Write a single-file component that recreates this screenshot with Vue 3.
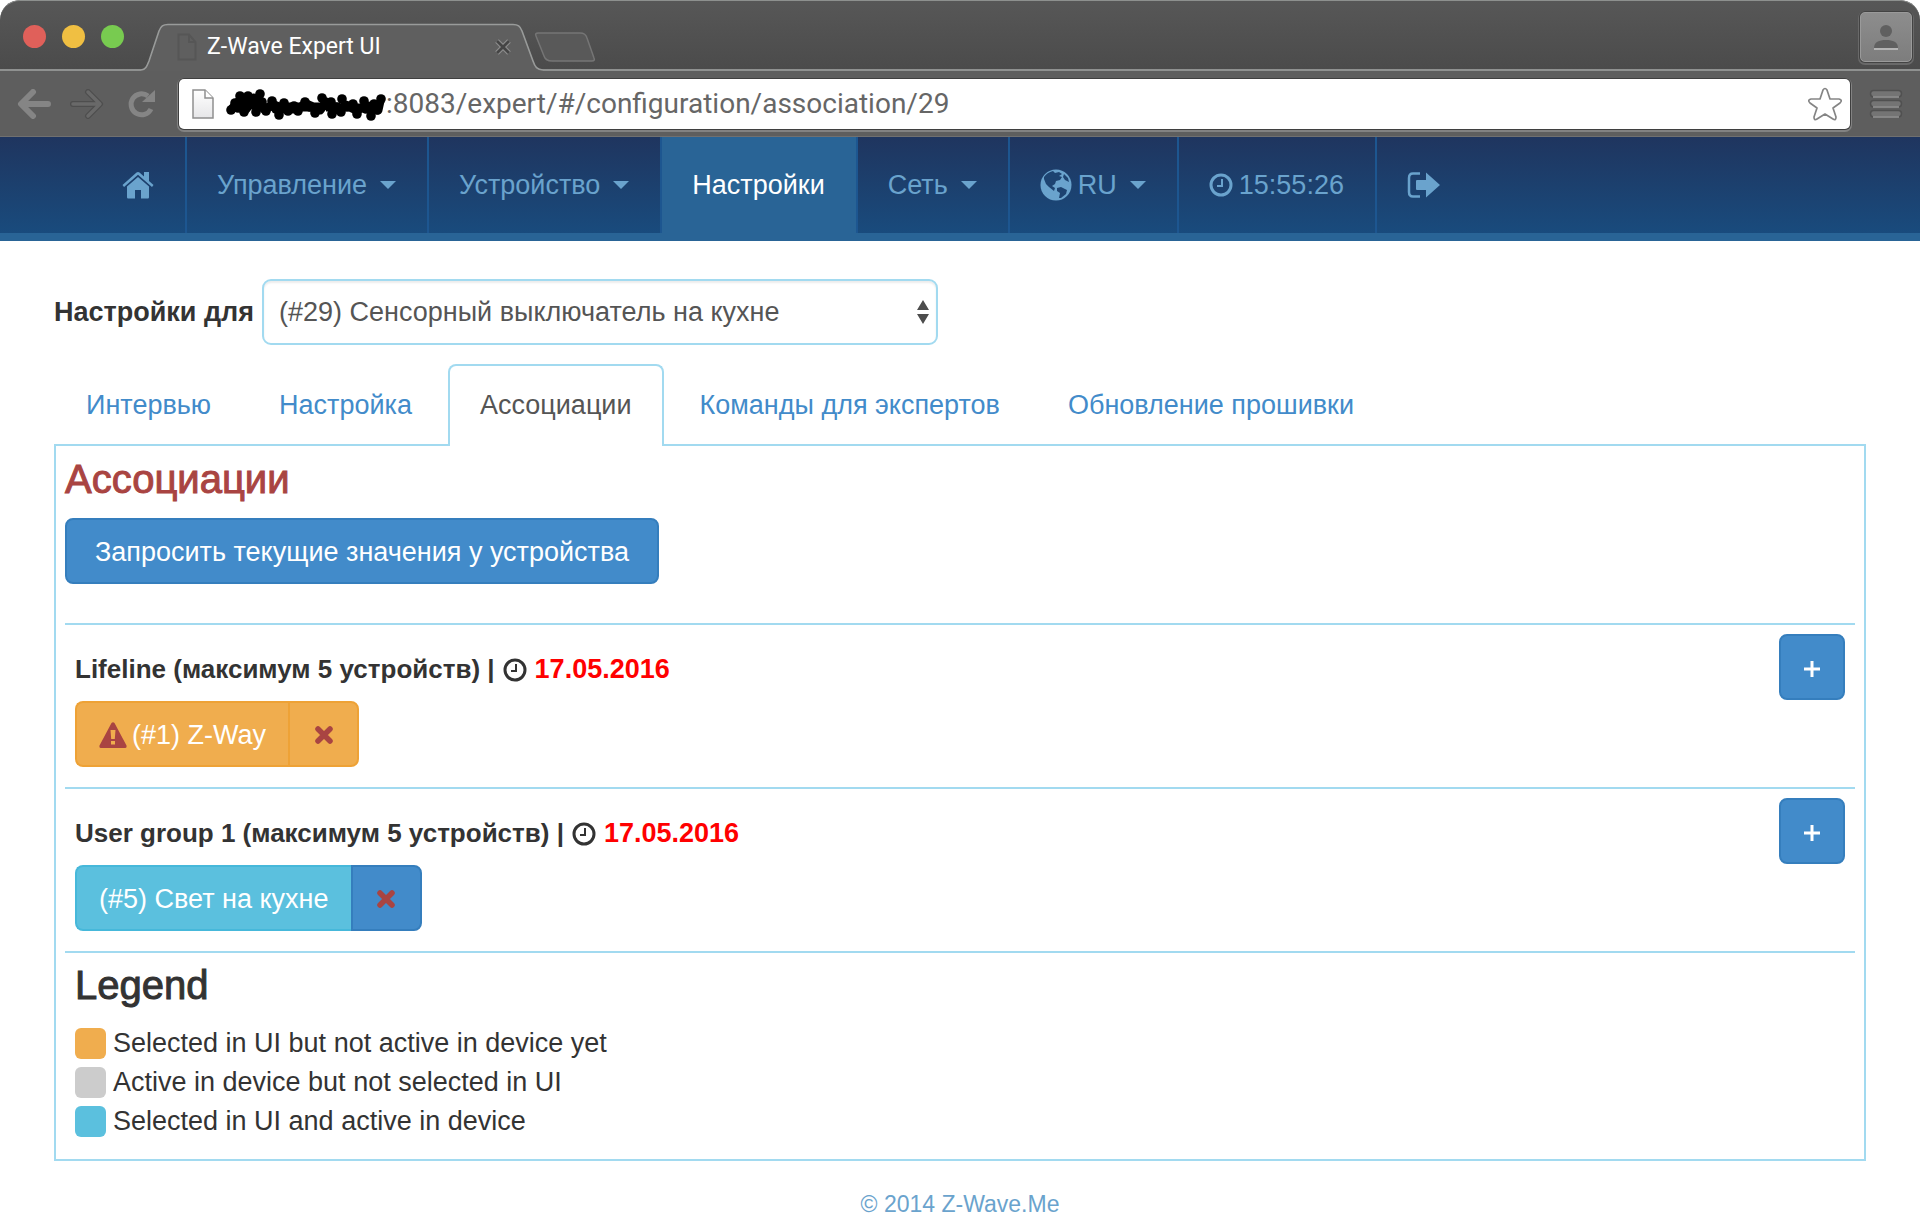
<script setup>
import { ref } from 'vue'

const address = ref(':8083/expert/#/configuration/association/29')
const device = ref('29')

const tabs = [
  { label: 'Интервью' },
  { label: 'Настройка' },
  { label: 'Ассоциации', active: true },
  { label: 'Команды для экспертов' },
  { label: 'Обновление прошивки' },
]

const groups = [
  { title: 'Lifeline (максимум 5 устройств) |', date: '17.05.2016', device: '(#1) Z-Way', kind: 'pending', warning: true },
  { title: 'User group 1 (максимум 5 устройств) |', date: '17.05.2016', device: '(#5) Свет на кухне', kind: 'stored', warning: false },
]

const legend = [
  { kind: 'pending', text: 'Selected in UI but not active in device yet' },
  { kind: 'device-only', text: 'Active in device but not selected in UI' },
  { kind: 'stored', text: 'Selected in UI and active in device' },
]

// Dots that make up the marker scribble over the host name
const blots = [
  [5, 26], [9, 19], [12, 24], [14, 12], [17, 17], [18, 28], [22, 12], [24, 20], [30, 28], [34, 10], [36, 18], [40, 27],
  [46, 17], [50, 25], [53, 31], [58, 19], [62, 27], [68, 22], [72, 27], [79, 18], [84, 23], [89, 29], [96, 14],
  [100, 20], [105, 18], [106, 30], [110, 23], [116, 15], [115, 28], [121, 23], [127, 20], [131, 30], [138, 17],
  [140, 25], [145, 32], [148, 20], [151, 26], [155, 15],
]
</script>

<template>
  <div class="window">
    <header class="chrome">
      <div class="strip">
        <div class="lights">
          <button class="light close" aria-label="Close"></button>
          <button class="light minimise" aria-label="Minimise"></button>
          <button class="light zoom" aria-label="Zoom"></button>
        </div>
        <div class="browser-tab">
          <svg class="tab-shape" viewBox="0 0 402 48" width="402" height="48" aria-hidden="true">
            <path d="M0 46.500C5 46 6 43 8 38L18 8C20 3 22 1.500 27 1.500H372C377 1.500 379 3 381 8L392 38C394 44 396 46 402 46.500V48H0Z" fill="#5f5f5f" />
            <path d="M0 47C5 46.500 6 43 8 38L18 8C20 3 22 1.500 27 1.500H372C377 1.500 379 3 381 8L392 38C394 44 396 46.500 402 47" fill="none" stroke="#999b9a" stroke-width="1.600" />
          </svg>
          <svg class="tab-page" viewBox="0 0 20 28" width="20" height="28" aria-hidden="true">
            <path d="M1.500 1.500H12L18.500 9V26.500H1.500ZM12 1.500V9H18.500" fill="none" stroke="#565656" stroke-width="2" />
          </svg>
          <span class="tab-title">Z-Wave Expert UI</span>
          <button class="tab-close" aria-label="Close tab">
            <svg viewBox="0 0 18 18" width="18" height="18"><path d="M3 3L15 15M15 3L3 15" stroke="#8e8e8e" stroke-width="5" /><path d="M3 3L15 15M15 3L3 15" stroke="#454545" stroke-width="2.800" /></svg>
          </button>
        </div>
        <button class="new-tab" aria-label="New tab">
          <svg viewBox="0 0 62 32" width="62" height="32"><path d="M4 2H46C50 2 52 3 53 7L60 27C61 29 60 30 58 30H18C13 30 11 28 10 25L2 5C1 3 2 2 4 2Z" fill="#595959" stroke="#757575" stroke-width="1.500" /></svg>
        </button>
        <button class="profile" aria-label="Profile">
          <svg viewBox="0 0 26 26" width="26" height="26"><path d="M1 25H25" stroke="#b4b4b4" stroke-width="2" /><circle cx="13" cy="7" r="6" fill="#606060" /><path d="M1 24C1 18 6 16 13 16S25 18 25 24Z" fill="#606060" /></svg>
        </button>
      </div>
      <div class="toolbar">
        <button class="tool" aria-label="Back">
          <svg viewBox="0 0 34 30" width="34" height="30"><path d="M16 3L4 15L16 27M5 15H31" fill="none" stroke="#858585" stroke-width="6" stroke-linejoin="round" stroke-linecap="round" /></svg>
        </button>
        <button class="tool" aria-label="Forward">
          <svg viewBox="0 0 34 30" width="34" height="30"><path d="M18 3L30 15L18 27M29 15H3" fill="none" stroke="#4e4e4e" stroke-width="6" stroke-linejoin="round" stroke-linecap="round" /><path d="M18 3L30 15L18 27M29 15H3" fill="none" stroke="#696969" stroke-width="3.500" stroke-linejoin="round" stroke-linecap="round" /></svg>
        </button>
        <button class="tool" aria-label="Reload">
          <svg viewBox="0 0 34 30" width="34" height="30"><path d="M25 7A10.500 10.500 0 1 0 28 20" fill="none" stroke="#858585" stroke-width="5" /><path d="M32 1V13H19Z" fill="#858585" /></svg>
        </button>
        <div class="address">
          <svg viewBox="0 0 24 32" width="24" height="32" aria-hidden="true"><defs><linearGradient id="sheet" x2="0" y2="1"><stop stop-color="#fff" /><stop offset="1" stop-color="#e6e6e8" /></linearGradient></defs><path d="M2 2H14L22 10V30H2Z" fill="url(#sheet)" stroke="#8f8f8f" stroke-width="1.500" /><path d="M14 2V10H22" fill="#fff" stroke="#8f8f8f" stroke-width="1.500" /></svg>
          <svg class="scribble" viewBox="0 0 160 40" width="160" height="40" aria-hidden="true">
            <path d="M5 26L14 16L20 25L28 14L38 25L48 21L58 25L70 25L80 20L94 26L100 18L112 26L120 21L130 26L142 22L152 26L154 17M10 21H36M100 23H114M126 24H152M60 23H94" fill="none" stroke="#000" stroke-width="9" stroke-linejoin="round" />
            <circle v-for="(b, i) in blots" :key="i" :cx="b[0]" :cy="b[1]" r="4.800" />
          </svg>
          <input v-model="address" aria-label="Address" spellcheck="false" />
          <button class="star" aria-label="Bookmark">
            <svg viewBox="0 0 36 36" width="36" height="36"><path d="M16 4Q18 1 20 4L23 13H32Q36 14 33 17L26 22L29 31Q29 35 26 33L18 28L10 33Q7 35 7 31L10 22L3 17Q0 14 4 13H13Z" fill="#fff" stroke="#858585" stroke-width="1.700" stroke-linejoin="round" /></svg>
          </button>
        </div>
        <button class="menu" aria-label="Menu">
          <svg viewBox="0 0 34 30" width="34" height="30"><g fill="#747474" stroke="#505050" stroke-width="1.500"><rect x="1.500" y="1.500" width="31" height="6.500" rx="3.200" /><rect x="1.500" y="11.500" width="31" height="6.500" rx="3.200" /><rect x="1.500" y="21.500" width="31" height="6.500" rx="3.200" /></g><path d="M4 8H30M4 18H30M4 28H30" stroke="#979797" stroke-width="1.500" /></svg>
        </button>
      </div>
    </header>

    <nav class="nav">
      <a class="item" href="#home" aria-label="Home">
        <svg viewBox="0 0 32 28" width="32" height="28"><path d="M16 6L27 15.500V26C27 27 26.500 27.500 25.500 27.500H19V19H13V27.500H6.500C5.500 27.500 5 27 5 26V15.500Z" /><path d="M0.500 14L14.500 1.500Q16 0.300 17.500 1.500L22 5.500V1H27V10L31.500 14L30 16L16 3.800L2 16Z" /></svg>
      </a>
      <a class="item" href="#control">Управление<i class="caret"></i></a>
      <a class="item" href="#device">Устройство<i class="caret"></i></a>
      <a class="item active" href="#settings">Настройки</a>
      <a class="item" href="#network">Сеть<i class="caret"></i></a>
      <a class="item" href="#language">
        <svg class="lead" viewBox="0 0 32 32" width="32" height="32"><circle cx="16" cy="16" r="15.500" /><path d="M4 8C6 5 9 3 13 2L15 4L19 3L22 5L19 7L22 8L20 11L16 12L15 15L12 17L15 19L14 22L9 18L6 15L4 10ZM17 19L21 18L27 21L26 25L21 29L19 29L20 24L17 22ZM24 5L28 9L29 13L25 11L23 8Z" fill="#1d4371" /></svg>
        RU<i class="caret"></i>
      </a>
      <span class="item">
        <svg class="lead" viewBox="0 0 24 24" width="24" height="24"><circle cx="12" cy="12" r="10" fill="none" stroke="currentColor" stroke-width="3" /><path d="M13 6V13H8" fill="none" stroke="currentColor" stroke-width="2" /></svg>
        15:55:26
      </span>
      <a class="item" href="#logout" aria-label="Log out">
        <svg viewBox="0 0 34 28" width="34" height="28"><path d="M13 2.500H6C3 2.500 2 4 2 7V21C2 24 3 25.500 6 25.500H13" fill="none" stroke="currentColor" stroke-width="2.500" /><path d="M10 9H19V1.500L33 14L19 26.500V19H10Q9 19 9 18V10Q9 9 10 9Z" /></svg>
      </a>
    </nav>

    <main class="page">
      <div class="picker">
        <label for="device">Настройки для</label>
        <div class="select">
          <select id="device" v-model="device">
            <option value="29">(#29) Сенсорный выключатель на кухне</option>
          </select>
          <svg class="arrows" viewBox="0 0 12 24" width="12" height="24" aria-hidden="true"><path d="M6 0L12 10H0ZM6 24L0 14H12Z" fill="#4d4d4d" /></svg>
        </div>
      </div>

      <div class="tabs">
        <a v-for="t in tabs" :key="t.label" class="tab" :class="{ active: t.active }" href="#tab">{{ t.label }}</a>
      </div>

      <section class="panel">
        <h3 class="heading danger">Ассоциации</h3>
        <button class="btn primary request">Запросить текущие значения у устройства</button>

        <div class="groups">
          <div v-for="g in groups" :key="g.title" class="group">
            <div class="info">
              <p class="title">
                {{ g.title }}
                <svg viewBox="0 0 24 24" width="24" height="24" aria-hidden="true"><circle cx="12" cy="12" r="10" fill="none" stroke="#333" stroke-width="3" /><path d="M13 6V13H8" fill="none" stroke="#333" stroke-width="2" /></svg>
                <span class="date">{{ g.date }}</span>
              </p>
              <div class="pair" :class="g.kind">
                <button class="btn name">
                  <svg v-if="g.warning" viewBox="0 0 28 26" width="28" height="26" aria-hidden="true"><path fill-rule="evenodd" d="M12.500 1Q14 -0.500 15.500 1L27.500 23.500Q28 26 26 26H2Q0 26 0.500 23.500ZM11.500 8L12.200 17H15.800L16.500 8ZM12 19V22.500H16V19Z" fill="#a94442" /></svg>
                  {{ g.device }}
                </button>
                <button class="btn remove" aria-label="Remove">
                  <svg viewBox="0 0 20 20" width="20" height="20"><path d="M4 4L16 16M16 4L4 16" stroke="#a94442" stroke-width="5.500" stroke-linecap="round" /></svg>
                </button>
              </div>
            </div>
            <button class="btn primary add" aria-label="Add device">
              <svg viewBox="0 0 16 16" width="16" height="16"><path d="M8 0V16M0 8H16" stroke="#fff" stroke-width="3" /></svg>
            </button>
          </div>
        </div>

        <div class="legend">
          <h3 class="heading">Legend</h3>
          <ul>
            <li v-for="l in legend" :key="l.text"><i class="swatch" :class="l.kind"></i>{{ l.text }}</li>
          </ul>
        </div>
      </section>
    </main>

    <footer class="footer"><a href="#about">© 2014 Z-Wave.Me</a></footer>
  </div>
</template>

<style>
body {
  margin: 0;
  background: #fff;
}
</style>

<style scoped>
* {
  box-sizing: border-box;
}
.window {
  font: 27px/39px "Liberation Sans", Arial, sans-serif;
  color: #333;
}
svg {
  display: block;
  flex: none;
}
button {
  font: inherit;
  padding: 0;
  border: 0;
  background: none;
  color: inherit;
}
a {
  text-decoration: none;
}

/* Browser frame */
.chrome {
  background: #5e5e5e;
  border-radius: 20px 20px 0 0;
  border-bottom: 1px solid #707070;
  overflow: hidden;
}
.strip {
  display: flex;
  height: 71px;
  padding: 0 8px 0 23px;
  background: linear-gradient(#575757, #4b4b4b);
  border-top: 1px solid #8d908e;
  border-bottom: 2px solid #8f9190;
  border-radius: 20px 20px 0 0;
}
.lights {
  display: flex;
  gap: 16px;
  width: 118px;
  padding-top: 24px;
}
.light {
  width: 23px;
  height: 23px;
  border-radius: 50%;
}
.close { background: #e0605a; }
.minimise { background: #f0bf42; }
.zoom { background: #78cb50; }
.browser-tab {
  position: relative;
  display: flex;
  align-items: center;
  align-self: flex-end;
  width: 402px;
  height: 48px;
  margin-bottom: -2px;
  padding: 0 31px 0 36px;
  font: 23px/28px Roboto, sans-serif;
  color: #fff;
}
.tab-shape {
  position: absolute;
  left: 0;
  top: 0;
}
.tab-page,
.tab-title,
.tab-close {
  position: relative;
}
.tab-title {
  flex: 1;
  margin-left: 10px;
  white-space: nowrap;
}
.new-tab {
  align-self: flex-end;
  margin: 0 auto 6px -9px;
}
.profile {
  display: grid;
  place-items: center;
  width: 52px;
  height: 50px;
  margin-top: 11px;
  background: linear-gradient(#8d8d8d, #7d7d7d);
  border: 1px solid #9a9a9a;
  border-radius: 5px;
  box-shadow: 0 0 0 1px #434343, 0 1px 0 2px #696969;
}
.toolbar {
  display: flex;
  align-items: center;
  height: 65px;
  padding: 0 17px;
}
.tool {
  margin-right: 19px;
}
.address {
  display: flex;
  flex: 1;
  align-items: center;
  height: 50px;
  margin-left: 3px;
  padding: 0 7px 0 12px;
  background: #fff;
  border-radius: 5px;
  box-shadow: 0 0 0 1px #3f3f3f, 0 1px 0 2px #828282;
}
.scribble {
  margin-left: 11px;
}
.address input {
  flex: 1;
  min-width: 0;
  height: 40px;
  padding: 0;
  border: 0;
  outline: 0;
  background: none;
  font: 28px/40px Roboto, sans-serif;
  color: #666;
}
.menu {
  margin-left: 19px;
}

/* Site navigation */
.nav {
  display: flex;
  height: 104px;
  padding-left: 92px;
  background: linear-gradient(#1f355f, #194b7d);
  border-bottom: 8px solid #296496;
}
.item {
  display: flex;
  align-items: center;
  padding: 0 31px 0 30px;
  border-right: 2px solid #1d5690;
  color: #6aa3cd;
  white-space: nowrap;
}
.item:last-child {
  border: 0;
}
.item svg {
  fill: currentColor;
}
.item.active {
  background: #296496;
  color: #fff;
}
.caret {
  margin-left: 13px;
  border: 8px solid transparent;
  border-top-color: currentColor;
  border-bottom: 0;
}
.lead {
  margin-right: 6px;
}

/* Page */
.page {
  padding: 38px 54px 0;
}
.picker {
  display: flex;
  align-items: center;
}
.picker label {
  font-weight: bold;
  margin-right: 8px;
}
.select {
  position: relative;
  width: 676px;
}
.select select {
  display: block;
  appearance: none;
  width: 100%;
  height: 66px;
  padding: 0 30px 0 15px;
  border: 2px solid #a2daf0;
  border-radius: 9px;
  background: #fff;
  box-shadow: inset 0 2px 2px #ececec;
  font: inherit;
  color: #555;
}
.arrows {
  position: absolute;
  right: 9px;
  top: 21px;
  pointer-events: none;
}
.tabs {
  display: flex;
  gap: 4px;
  margin: 19px 0 -2px;
}
.tab {
  position: relative;
  height: 82px;
  padding: 20px 30px 0;
  border: 2px solid transparent;
  border-bottom: 0;
  border-radius: 8px 8px 0 0;
  color: #428bca;
  white-space: nowrap;
}
.tab.active {
  background: #fff;
  border-color: #a2daf0;
  color: #555;
}
.panel {
  padding: 12px 9px 18px;
  border: 2px solid #a2daf0;
}
.heading {
  margin: 0;
  font-size: 40px;
  line-height: 43px;
  font-weight: normal;
  -webkit-text-stroke: 1px currentColor;
}
.danger {
  color: #a94442;
  margin-bottom: 17px;
}
.btn {
  display: inline-flex;
  align-items: center;
  justify-content: center;
  height: 66px;
  padding: 2px 22px 0;
  border: 2px solid;
  border-radius: 8px;
  color: #fff;
  white-space: nowrap;
}
.primary,
.stored .remove {
  background: #428bca;
  border-color: #357ebd;
}
.request {
  padding: 2px 28px 0;
}
.groups {
  margin-top: 39px;
}
.group {
  display: flex;
  justify-content: space-between;
  padding: 0 10px 20px;
  border-top: 2px solid #a2daf0;
}
.title {
  display: flex;
  align-items: center;
  gap: 8px;
  margin: 25px 0 12px;
  font-size: 26px;
  font-weight: bold;
}
.date {
  font-size: 27px;
  color: #f00;
}
.add {
  width: 66px;
  margin-top: 9px;
  padding: 4px 0 0;
}
.pair {
  display: flex;
}
.name {
  gap: 5px;
  border-right: 0;
  border-radius: 8px 0 0 8px;
}
.remove {
  width: 71px;
  border-radius: 0 8px 8px 0;
}
.pending .btn {
  background: #f0ad4e;
  border-color: #eea236;
}
.stored .name {
  background: #5bc0de;
  border-color: #46b8da;
}
.legend {
  padding: 11px 10px 0;
  border-top: 2px solid #a2daf0;
}
.legend ul {
  margin: 17px 0 0;
  padding: 0;
  list-style: none;
}
.legend li {
  display: flex;
  align-items: center;
  gap: 7px;
}
.swatch {
  width: 31px;
  height: 31px;
  border-radius: 6px;
}
.swatch.pending { background: #f0ad4e; }
.swatch.device-only { background: #ccc; }
.swatch.stored { background: #5bc0de; }

.footer {
  margin-top: 27px;
  text-align: center;
  font-size: 23px;
  line-height: 33px;
}
.footer a {
  color: #6aa3cd;
}
</style>
